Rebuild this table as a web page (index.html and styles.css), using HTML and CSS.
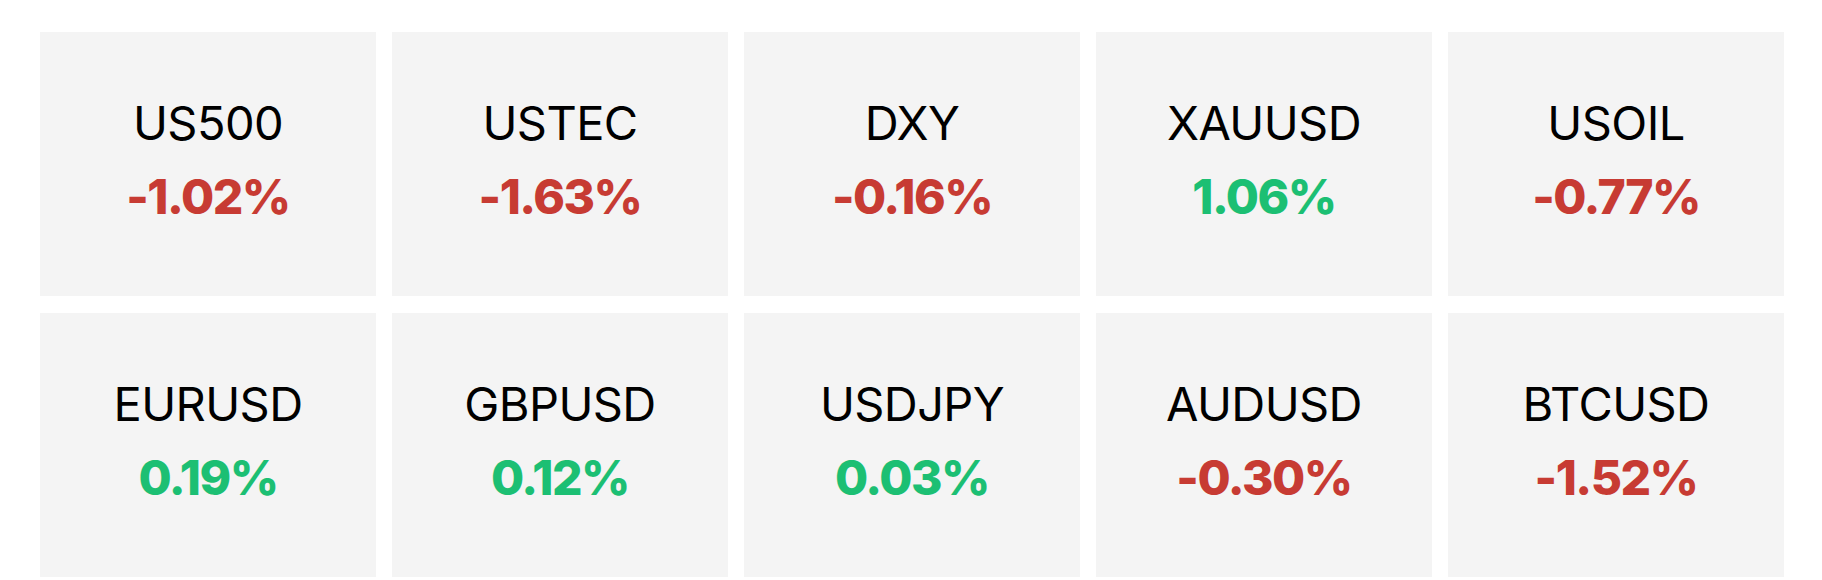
FILE: index.html
```html
<!DOCTYPE html>
<html lang="en">
<head>
<meta charset="utf-8">
<title>Market Overview</title>
<link rel="stylesheet" href="styles.css">
</head>
<body>
<main class="tickers">
  <div class="card"><div class="name">US500</div><div class="change down">-1.02%</div></div>
  <div class="card"><div class="name">USTEC</div><div class="change down">-1.63%</div></div>
  <div class="card"><div class="name">DXY</div><div class="change down">-0.16%</div></div>
  <div class="card"><div class="name">XAUUSD</div><div class="change up">1.06%</div></div>
  <div class="card"><div class="name">USOIL</div><div class="change down">-0.77%</div></div>
  <div class="card"><div class="name">EURUSD</div><div class="change up">0.19%</div></div>
  <div class="card"><div class="name">GBPUSD</div><div class="change up">0.12%</div></div>
  <div class="card"><div class="name">USDJPY</div><div class="change up">0.03%</div></div>
  <div class="card"><div class="name">AUDUSD</div><div class="change down">-0.30%</div></div>
  <div class="card"><div class="name">BTCUSD</div><div class="change down">-1.52%</div></div>
</main>
</body>
</html>
```
FILE: styles.css
```css
html, body {
  margin: 0;
  padding: 0;
  background: #ffffff;
}
body {
  font-family: Inter, "Noto Sans", "Liberation Sans", sans-serif;
  color: #000000;
}
.tickers {
  display: grid;
  grid-template-columns: repeat(5, 336px);
  grid-auto-rows: 264px;
  column-gap: 16px;
  row-gap: 17px;
  padding: 32px 38px 0 40px;
}
.card {
  background: #f4f4f4;
  display: flex;
  flex-direction: column;
  align-items: center;
  padding-top: 63px;
  box-sizing: border-box;
}
.name {
  font-size: 47px;
  font-weight: 400;
  line-height: 56px;
  letter-spacing: -0.6px;
}
.change {
  font-size: 48px;
  font-weight: 800;
  line-height: 56px;
  margin-top: 18px;
  letter-spacing: -1.5px;
}
.down { color: #c73b33; }
.up { color: #1cbf73; }
```
